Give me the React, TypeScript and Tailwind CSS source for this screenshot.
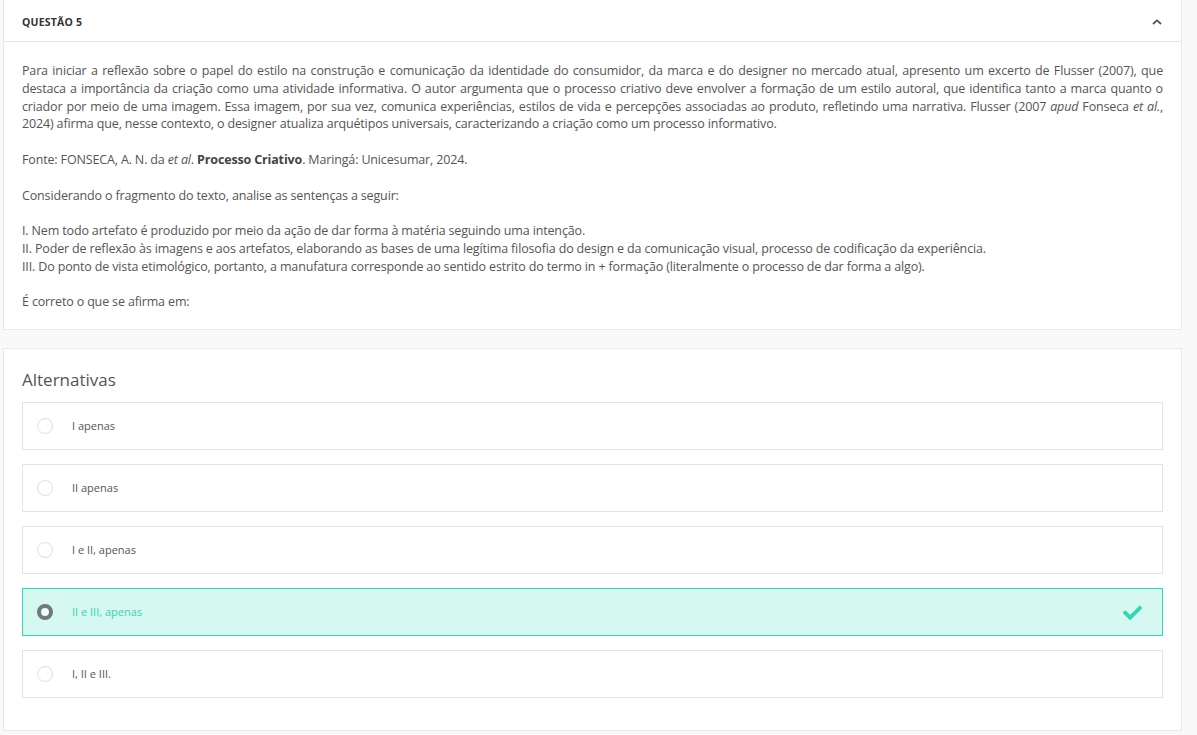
import React from 'react';

type Option = { id: string; label: string };

const options: Option[] = [
  { id: 'a', label: 'I apenas' },
  { id: 'b', label: 'II apenas' },
  { id: 'c', label: 'I e II, apenas' },
  { id: 'd', label: 'II e III, apenas' },
  { id: 'e', label: 'I, II e III.' },
];

const selectedId = 'd';

const ChevronUp = () => (
  <svg width="10" height="6" viewBox="0 0 10 6" fill="none">
    <path d="M1 5L5 1.4L9 5" stroke="#555" strokeWidth="1.8" />
  </svg>
);

// thick check mark, like the font-awesome one
const CheckMark = () => (
  <svg width="19" height="15" viewBox="0 0 512 400">
    <path
      fill="#33d6b3"
      d="M173.9 392.2L7.5 225.8c-10-10-10-26.2 0-36.2l36.2-36.2c10-10 26.2-10 36.2 0L192 265.5 432.1 25.4c10-10 26.2-10 36.2 0l36.2 36.2c10 10 10 26.2 0 36.2L210.1 392.2c-10 10-26.2 10-36.2 0z"
    />
  </svg>
);

const Radio = ({ checked }: { checked: boolean }) =>
  checked ? (
    <span className="w-[16px] h-[16px] rounded-full border-[4px] border-[#6f7a7d] bg-[#eefcf8] box-border" />
  ) : (
    <span className="w-[16px] h-[16px] rounded-full border border-[#dedede] bg-white box-border" />
  );

export default function App() {
  return (
    <div
      className="min-h-screen bg-[#f9f9f9] pl-[3px] pr-[15px] text-[#555]"
      style={{ fontFamily: '"Open Sans", "Noto Sans", sans-serif' }}
    >
      {/* question card */}
      <div className="bg-white border border-[#e9e9e9] border-t-0">
        <div className="flex items-center justify-between h-[42px] pt-[4px] px-[18px] border-b border-[#e6e6e6]">
          <span className="text-[10.5px] font-bold text-[#333] tracking-[0.2px]">QUESTÃO 5</span>
          <span className="mr-[1px] mt-[-2px]">
            <ChevronUp />
          </span>
        </div>
        <div className="px-[18px] pt-[20px] pb-[18px] text-[12.5px] leading-[17.8px] text-[#555] tracking-[-0.15px]">
          <p className="text-justify">
            Para iniciar a reflexão sobre o papel do estilo na construção e comunicação da identidade do consumidor, da
            marca e do designer no mercado atual, apresento um excerto de Flusser (2007), que destaca a importância da
            criação como uma atividade informativa. O autor argumenta que o processo criativo deve envolver a formação de
            um estilo autoral, que identifica tanto a marca quanto o criador por meio de uma imagem. Essa imagem, por sua
            vez, comunica experiências, estilos de vida e percepções associadas ao produto, refletindo uma narrativa.
            Flusser (2007 <i>apud</i> Fonseca <i>et al.</i>, 2024) afirma que, nesse contexto, o designer atualiza
            arquétipos universais, caracterizando a criação como um processo informativo.
          </p>
          <br />
          <p>
            Fonte: FONSECA, A. N. da <i>et al</i>. <b className="text-[#444]">Processo Criativo</b>. Maringá:
            Unicesumar, 2024.
          </p>
          <br />
          <p>Considerando o fragmento do texto, analise as sentenças a seguir:</p>
          <br />
          <p>
            I. Nem todo artefato é produzido por meio da ação de dar forma à matéria seguindo uma intenção.
            <br />
            II. Poder de reflexão às imagens e aos artefatos, elaborando as bases de uma legítima filosofia do design e da
            comunicação visual, processo de codificação da experiência.
            <br />
            III. Do ponto de vista etimológico, portanto, a manufatura corresponde ao sentido estrito do termo in +
            formação (literalmente o processo de dar forma a algo).
          </p>
          <br />
          <p>É correto o que se afirma em:</p>
        </div>
      </div>

      {/* answers card */}
      <div className="mt-[18px] bg-white border border-[#e9e9e9] px-[18px] pt-[19px] pb-[32px]">
        <h2 className="text-[17px] font-normal text-[#555] mb-[10px] leading-[24px]">Alternativas</h2>
        <div className="flex flex-col gap-[14px]">
          {options.map((opt) => {
            const checked = opt.id === selectedId;
            return (
              <div
                key={opt.id}
                className={
                  checked
                    ? 'flex items-center h-[48px] pl-[14px] pr-[20px] border border-[#2fdcbd] bg-[#d5f8f1]'
                    : 'flex items-center h-[48px] pl-[14px] pr-[20px] border border-[#e3e3e3] bg-white'
                }
              >
                <Radio checked={checked} />
                <span
                  className={
                    checked
                      ? 'ml-[19px] text-[11px] text-[#3cd2b2] flex-1'
                      : 'ml-[19px] text-[11px] text-[#555] flex-1'
                  }
                >
                  {opt.label}
                </span>
                {checked && <CheckMark />}
              </div>
            );
          })}
        </div>
      </div>
    </div>
  );
}
